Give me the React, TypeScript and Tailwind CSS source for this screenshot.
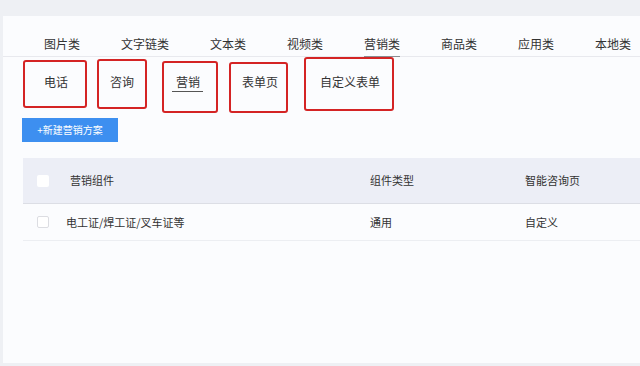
import React from 'react'

const font = { fontFamily: '"Noto Sans CJK SC", "Noto Sans", sans-serif' }

export default function App() {
  /* 顶部分类 */
  const tabs = ['图片类', '文字链类', '文本类', '视频类', '营销类', '商品类', '应用类', '本地类']
  const subTabs = ['电话', '咨询', '营销', '表单页', '自定义表单']

  /* 红色标注框 (覆盖在内容上) */
  const marks = [
    'left-[23px] top-[60px] w-[64px] h-[48px]',
    'left-[97px] top-[59px] w-[50px] h-[50px]',
    'left-[162px] top-[61px] w-[56px] h-[52px]',
    'left-[229px] top-[62px] w-[59px] h-[51px]',
    'left-[304px] top-[57px] w-[90px] h-[54px]',
  ]

  return (
    <div className="relative w-[640px] h-[366px] overflow-hidden bg-[#eef0f4] pt-[16px] pl-[3px] pb-[3px] text-[#333]" style={font}>
      <div className="h-full bg-[#fbfcfe]">
        {/* 分类标签 */}
        <div className="flex h-[41px] items-end border-b border-[#e8e9ee] pl-[41px] gap-[41px] text-[12px] leading-none">
          {tabs.map((t) => (
            <div
              key={t}
              className={`pb-[6px] whitespace-nowrap ${t === '营销类' ? 'border-b border-[#8a8c92] -mb-px' : ''}`}
            >
              {t}
            </div>
          ))}
        </div>

        {/* 子标签 */}
        <div className="flex pl-[41px] gap-[42px] pt-[19px] h-[61px] text-[12px] leading-none">
          {subTabs.map((t) => (
            <div key={t} className="relative whitespace-nowrap h-[18px]">
              {t}
              {t === '营销' && <div className="absolute left-[-4px] right-[-3px] top-[15px] h-px bg-[#555]" />}
            </div>
          ))}
        </div>

        <div className="flex pl-[19px]">
          <button className="block w-[96px] h-[24px] bg-[#3d8ff0] text-white text-[10px] leading-none">+新建营销方案</button>
        </div>

        {/* 表格 */}
        <div className="mt-[16px] ml-[20px] text-[11px] leading-none">
          <div className="flex items-center h-[46px] bg-[#eceef6] border-b border-[#dcdee5]">
            <div className="w-[47px] pl-[14px]">
              <div className="w-[12px] h-[12px] bg-white rounded-[2px]" />
            </div>
            <div className="w-[300px]">营销组件</div>
            <div className="w-[155px]">组件类型</div>
            <div>智能咨询页</div>
          </div>
          <div className="flex items-center h-[37px] border-b border-[#eceef2]">
            <div className="w-[43px] pl-[14px]">
              <div className="w-[12px] h-[12px] bg-white border border-[#dcdde2] rounded-[2px]" />
            </div>
            <div className="w-[304px]">电工证/焊工证/叉车证等</div>
            <div className="w-[155px]">通用</div>
            <div>自定义</div>
          </div>
        </div>
      </div>

      {marks.map((m) => (
        <div key={m} className={`absolute ${m} border-2 border-[#d42424] rounded-[3px]`} />
      ))}
    </div>
  )
}
